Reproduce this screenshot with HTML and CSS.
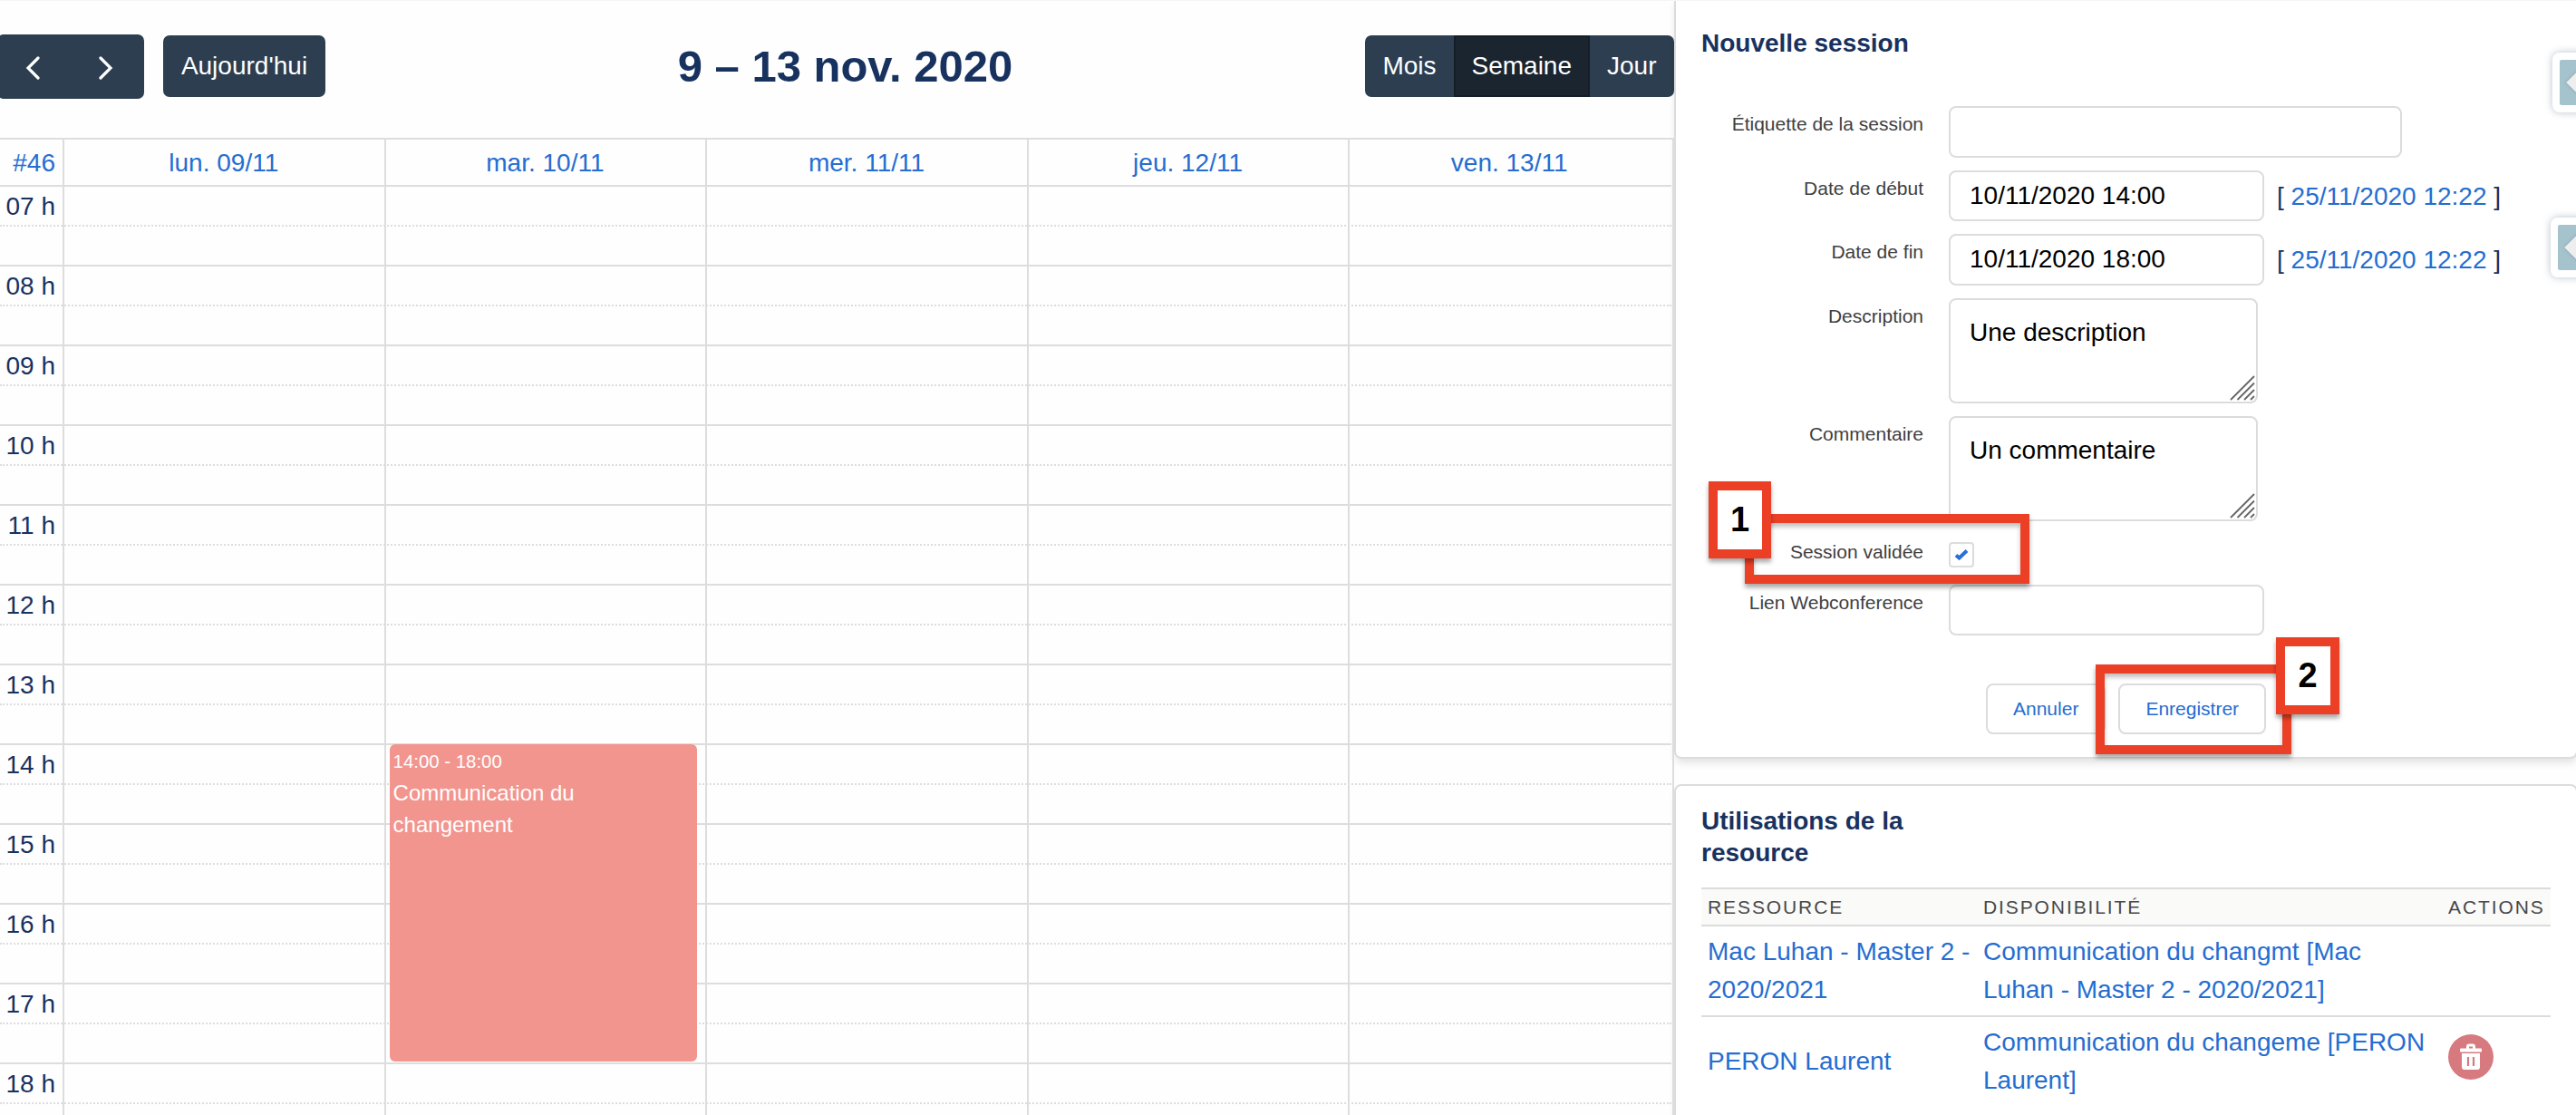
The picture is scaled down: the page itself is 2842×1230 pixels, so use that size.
FILE: index.html
```
<!DOCTYPE html>
<html lang="fr">
<head>
    <meta charset="UTF-8">
    <meta name="viewport" content="width=device-width, initial-scale=1.0">
    <title>Nouvelle session</title>
    <link rel="stylesheet" href="styles.css">
</head>
<body>
    <div class="page">
        <!-- Calendar -->
        <div class="calendar">
            <div class="toolbar">
                <div class="toolbar-left">
                    <div class="nav-group">
                        <button type="button" class="nav-button" aria-label="Précédent">
                            <svg width="16" height="26" viewBox="0 0 16 26"><path d="M14 2L3 13L14 24"/></svg>
                        </button>
                        <button type="button" class="nav-button" aria-label="Suivant">
                            <svg width="16" height="26" viewBox="0 0 16 26"><path d="M2 2L13 13L2 24"/></svg>
                        </button>
                    </div>
                    <button type="button" class="today-button">Aujourd'hui</button>
                </div>
                <h2 class="calendar-title">9 – 13 nov. 2020</h2>
                <div class="view-group">
                    <button type="button" class="view-button">Mois</button>
                    <button type="button" class="view-button active">Semaine</button>
                    <button type="button" class="view-button">Jour</button>
                </div>
            </div>

            <div class="week">
                <div class="day-header">
                    <a class="week-number">#46</a>
                    <a>lun. 09/11</a>
                    <a>mar. 10/11</a>
                    <a>mer. 11/11</a>
                    <a>jeu. 12/11</a>
                    <a>ven. 13/11</a>
                </div>
                <div class="slots">
                    <div class="slot"><span>07 h</span></div>
                    <div class="slot half"></div>
                    <div class="slot"><span>08 h</span></div>
                    <div class="slot half"></div>
                    <div class="slot"><span>09 h</span></div>
                    <div class="slot half"></div>
                    <div class="slot"><span>10 h</span></div>
                    <div class="slot half"></div>
                    <div class="slot"><span>11 h</span></div>
                    <div class="slot half"></div>
                    <div class="slot"><span>12 h</span></div>
                    <div class="slot half"></div>
                    <div class="slot"><span>13 h</span></div>
                    <div class="slot half"></div>
                    <div class="slot"><span>14 h</span></div>
                    <div class="slot half"></div>
                    <div class="slot"><span>15 h</span></div>
                    <div class="slot half"></div>
                    <div class="slot"><span>16 h</span></div>
                    <div class="slot half"></div>
                    <div class="slot"><span>17 h</span></div>
                    <div class="slot half"></div>
                    <div class="slot"><span>18 h</span></div>
                    <div class="slot half"></div>
                </div>
                <!-- Day columns, laid over the slots -->
                <div class="columns">
                    <div class="column"></div>
                    <div class="column"></div>
                    <div class="column">
                        <div class="event">
                            <div class="event-time">14:00 - 18:00</div>
                            <div class="event-title">Communication du changement</div>
                        </div>
                    </div>
                    <div class="column"></div>
                    <div class="column"></div>
                    <div class="column"></div>
                </div>
            </div>
        </div>

        <!-- Side panel -->
        <div class="panel">
            <div class="card session-card">
                <h3 class="card-title">Nouvelle session</h3>
                <form>
                    <div class="form-row">
                        <label for="label">Étiquette de la session</label>
                        <input type="text" id="label" class="textbox wide">
                    </div>
                    <div class="form-row">
                        <label for="start">Date de début</label>
                        <input type="text" id="start" class="textbox" value="10/11/2020 14:00">
                        <span class="date-hint">[ <a>25/11/2020 12:22</a> ]</span>
                    </div>
                    <div class="form-row">
                        <label for="end">Date de fin</label>
                        <input type="text" id="end" class="textbox" value="10/11/2020 18:00">
                        <span class="date-hint">[ <a>25/11/2020 12:22</a> ]</span>
                    </div>
                    <div class="form-row">
                        <label for="description">Description</label>
                        <div class="textarea-wrapper">
                            <textarea id="description">Une description</textarea>
                            <svg class="grip" width="28" height="28" viewBox="0 0 28 28"><path d="M1 27L27 1M8.500 27L27 8.500M16 27L27 16M23 27L27 23"/></svg>
                        </div>
                    </div>
                    <div class="form-row">
                        <label for="comment">Commentaire</label>
                        <div class="textarea-wrapper">
                            <textarea id="comment">Un commentaire</textarea>
                            <svg class="grip" width="28" height="28" viewBox="0 0 28 28"><path d="M1 27L27 1M8.500 27L27 8.500M16 27L27 16M23 27L27 23"/></svg>
                        </div>
                    </div>
                    <div class="form-row check-row">
                        <label>Session validée</label>
                        <div class="checkbox">
                            <svg width="16" height="14" viewBox="0 0 16 14"><path d="M2 7.500L5.500 10.500L14 2.500"/></svg>
                        </div>
                    </div>
                    <div class="form-row">
                        <label for="link">Lien Webconference</label>
                        <input type="text" id="link" class="textbox">
                    </div>
                    <div class="form-actions">
                        <button type="button" class="button">Annuler</button>
                        <button type="button" class="button">Enregistrer</button>
                    </div>
                </form>
            </div>

            <div class="card usage-card">
                <h3 class="card-title">Utilisations de la resource</h3>
                <table class="usage-table">
                    <thead>
                        <tr>
                            <th class="col-resource">Ressource</th>
                            <th class="col-slot">Disponibilité</th>
                            <th>Actions</th>
                        </tr>
                    </thead>
                    <tbody>
                        <tr>
                            <td><a>Mac Luhan - Master 2 - 2020/2021</a></td>
                            <td><a>Communication du changmt [Mac Luhan - Master 2 - 2020/2021]</a></td>
                            <td></td>
                        </tr>
                        <tr>
                            <td><a>PERON Laurent</a></td>
                            <td><a>Communication du changeme [PERON Laurent]</a></td>
                            <td>
                                <div class="delete">
                                    <svg width="26" height="30" viewBox="0 0 26 30">
                                        <path class="lid" d="M9.500 6V3.500Q9.500 2 11 2H15Q16.500 2 16.500 3.500V6"/>
                                        <rect x="1" y="5.500" width="24" height="4" rx="1"/>
                                        <path d="M3 11H23V26Q23 29 20 29H6Q3 29 3 26Z"/>
                                        <path class="slit" d="M10 15V25M16 15V25"/>
                                    </svg>
                                </div>
                            </td>
                        </tr>
                    </tbody>
                </table>
            </div>
        </div>

        <!-- Drawer handles at the window edge -->
        <div class="drawer drawer-top"><div class="drawer-face"><span></span></div></div>
        <div class="drawer drawer-bottom"><div class="drawer-face"><span></span></div></div>

        <!-- Numbered marks -->
        <div class="mark mark-check"></div>
        <div class="mark-number number-one">1</div>
        <div class="mark mark-save"></div>
        <div class="mark-number number-two">2</div>
    </div>
</body>
</html>
```
FILE: styles.css
```
* {
    box-sizing: border-box;
}
body {
    margin: 0;
    font-family: "Liberation Sans", Arial, sans-serif;
    font-size: 28px;
    color: #18325f;
    background-color: #fefefe;
}
button, input, textarea {
    font-family: inherit;
    margin: 0;
}
a {
    color: #256dd1;
}
.page {
    position: relative;
    display: flex;
    width: 2842px;
    height: 1230px;
    overflow: hidden;
    border-top: 1px solid #f6f6f6;
}

/* Calendar */
.calendar {
    width: 1847px;
    flex: none;
}
.toolbar {
    display: flex;
    justify-content: space-between;
    align-items: center;
    height: 151px;
    padding-bottom: 7px;
    margin-left: -3px;
}
.toolbar-left {
    display: flex;
    align-items: center;
    gap: 21px;
}
.nav-group {
    display: flex;
    height: 71px;
    width: 162px;
    border-radius: 7px;
    background-color: #2c3e50;
}
.nav-button {
    flex: 1;
    border: none;
    padding: 4px 3px 0 0;
    background: none;
}
.nav-button svg {
    display: block;
    margin: 0 auto;
}
.nav-button path {
    fill: none;
    stroke: #fff;
    stroke-width: 3.2;
    stroke-linecap: round;
}
.today-button, .view-button {
    height: 68px;
    padding: 0 17.5px;
    border: 2px solid #2c3e50;
    background-color: #2c3e50;
    color: #fff;
    font-size: 28px;
}
.today-button {
    width: 179px;
    border-radius: 7px;
}
.calendar-title {
    margin: 0;
    font-size: 49px;
    line-height: 60px;
}
.view-group {
    display: flex;
}
.view-button:first-child {
    border-radius: 7px 0 0 7px;
}
.view-button:last-child {
    border-radius: 0 7px 7px 0;
}
.view-button.active {
    background-color: #1a252f;
    border-color: #151e27;
}
.week {
    position: relative;
    height: 1078px;
    overflow: hidden;
    border-top: 2px solid #ddd;
    border-right: 2px solid #ddd;
}
.day-header {
    display: grid;
    grid-template-columns: 71px repeat(5, 354.6px);
    width: 1844px;
    height: 52px;
    border-bottom: 2px solid #ddd;
    line-height: 51px;
    text-align: center;
}
.day-header a {
    height: 50px;
    padding-right: 3px;
}
.day-header .week-number {
    text-align: right;
    padding-right: 10px;
}
.slots {
    width: 1844px;
}
.slot {
    height: 44px;
    border-bottom: 2px dotted #ddd;
    line-height: 43px;
}
.slot.half {
    border-bottom-style: solid;
}
.slot span {
    display: block;
    width: 61px;
    text-align: right;
    white-space: nowrap;
}
.columns {
    position: absolute;
    top: 0;
    bottom: 0;
    left: 0;
    display: grid;
    grid-template-columns: 71px repeat(5, 354.6px);
}
.column {
    position: relative;
    border-right: 2px solid #ddd;
}
.column:last-child {
    border-right: none;
}
.event {
    position: absolute;
    top: 667px;
    left: 4px;
    right: 9px;
    height: 350px;
    padding: 4px 60px 0 4px;
    border-radius: 6px;
    background-color: #f2958f;
    color: #fff;
    font-size: 24px;
    line-height: 35px;
}
.event-time {
    font-size: 20.4px;
    line-height: 31px;
    margin-bottom: 1px;
}

/* Side panel */
.panel {
    flex: none;
    width: 997px;
}
.card {
    padding: 0 27px 0 28px;
    border: 2px solid #dcdcdc;
    border-radius: 8px;
    background-color: #fff;
    box-shadow: 0 6px 10px -2px rgba(0, 0, 0, 0.12);
}
.card-title {
    margin: 0;
    width: 236px;
    font-size: 28px;
    line-height: 35px;
}
.session-card {
    height: 843px;
    margin-top: -7px;
    padding-top: 34px;
}
.session-card .card-title {
    margin-bottom: 52px;
}
.form-row {
    display: flex;
    align-items: flex-start;
    margin-bottom: 14px;
}
.form-row label {
    width: 245px;
    margin-right: 28px;
    text-align: right;
    font-size: 21px;
    line-height: 39px;
    color: #404040;
}
.textbox, textarea {
    border: 2px solid #dcdcdc;
    border-radius: 8px;
    background-color: #fff;
    padding: 0 21px;
    font-size: 28px;
    color: #000;
}
.textbox {
    width: 348px;
    height: 56.5px;
}
.textbox.wide {
    width: 500px;
}
.date-hint {
    margin-left: 14px;
    line-height: 57px;
    height: 56px;
}
.textarea-wrapper {
    position: relative;
    height: 116px;
}
textarea {
    display: block;
    width: 341px;
    height: 116px;
    padding-top: 15px;
    line-height: 42px;
    resize: none;
    overflow: hidden;
}
.grip {
    position: absolute;
    right: 3px;
    bottom: 3px;
    fill: none;
    stroke: #666;
    stroke-width: 1.8;
}
.check-row {
    height: 56px;
    margin-bottom: 0;
}
.checkbox {
    display: flex;
    align-items: center;
    justify-content: center;
    width: 28px;
    height: 28px;
    margin-top: 9px;
    border: 2px solid #dcdcdc;
    border-radius: 4px;
}
.checkbox path {
    fill: none;
    stroke: #2a70d6;
    stroke-width: 4;
}
.form-actions {
    display: flex;
    gap: 14px;
    margin: 53px 0 0 314px;
}
.button {
    height: 56px;
    padding: 0 28px;
    border: 2px solid #dcdcdc;
    border-radius: 8px;
    background-color: #fff;
    color: #256dd1;
    font-size: 21px;
}
.usage-card {
    height: 400px;
    margin-top: 28px;
    padding-top: 21px;
}
.usage-table {
    width: 937px;
    margin-top: 21px;
    border-collapse: separate;
    border-spacing: 0;
    table-layout: fixed;
}
.usage-table th {
    height: 43px;
    padding: 0 7px;
    border-top: 2px solid #dcdcdc;
    border-bottom: 2px solid #dcdcdc;
    background-color: #fafaf9;
    color: #484848;
    font-size: 21px;
    font-weight: normal;
    letter-spacing: 1.9px;
    text-align: left;
    text-transform: uppercase;
}
.usage-table td {
    height: 100px;
    padding: 7px 7px;
    border-bottom: 2px solid #dcdcdc;
    line-height: 42px;
}
.usage-table tr:last-child td {
    border-bottom-color: transparent;
}
.usage-table .col-resource {
    width: 304px;
}
.usage-table .col-slot {
    width: 513px;
}
.delete {
    display: flex;
    align-items: center;
    justify-content: center;
    width: 50px;
    height: 50px;
    margin-top: -10px;
    border-radius: 50%;
    background-color: #d77a80;
}
.delete svg {
    fill: #fff;
}
.delete .lid {
    fill: none;
    stroke: #fff;
    stroke-width: 3;
}
.delete .slit {
    stroke: #d77a80;
    stroke-width: 2.2;
}

/* Drawer handles */
.drawer {
    position: absolute;
    width: 60px;
    height: 66px;
    padding: 8px;
    border-radius: 8px;
    background-color: #fff;
    box-shadow: 0 0 8px rgba(80, 100, 120, 0.4);
}
.drawer-top {
    top: 57px;
    left: 2816px;
}
.drawer-bottom {
    top: 239px;
    left: 2814px;
}
.drawer-face {
    height: 50px;
    padding: 11px 0 0 9px;
    border-radius: 2px;
    background-color: #a5c3cd;
}
.drawer-face span {
    display: block;
    width: 28px;
    height: 28px;
    transform: rotate(45deg) scale(0.8);
    background-color: #eee;
    box-shadow: 0 0 4px rgba(80, 100, 120, 0.4);
}

/* Numbered marks */
.mark, .mark-number {
    position: absolute;
    border: 10px solid #ec4026;
    box-shadow: 0 4px 5px rgba(0, 0, 0, 0.35), inset 0 4px 5px rgba(0, 0, 0, 0.25);
}
.mark-check {
    left: 1925px;
    top: 566px;
    width: 314px;
    height: 77px;
}
.mark-save {
    left: 2312px;
    top: 732px;
    width: 216px;
    height: 99px;
}
.mark-number {
    width: 69px;
    height: 85px;
    background-color: #fff;
    box-shadow: 0 4px 5px rgba(0, 0, 0, 0.35);
    color: #000;
    font-size: 38px;
    font-weight: bold;
    line-height: 64px;
    text-align: center;
}
.number-one {
    left: 1885px;
    top: 530px;
}
.number-two {
    left: 2511px;
    top: 702px;
    width: 70px;
}
```
